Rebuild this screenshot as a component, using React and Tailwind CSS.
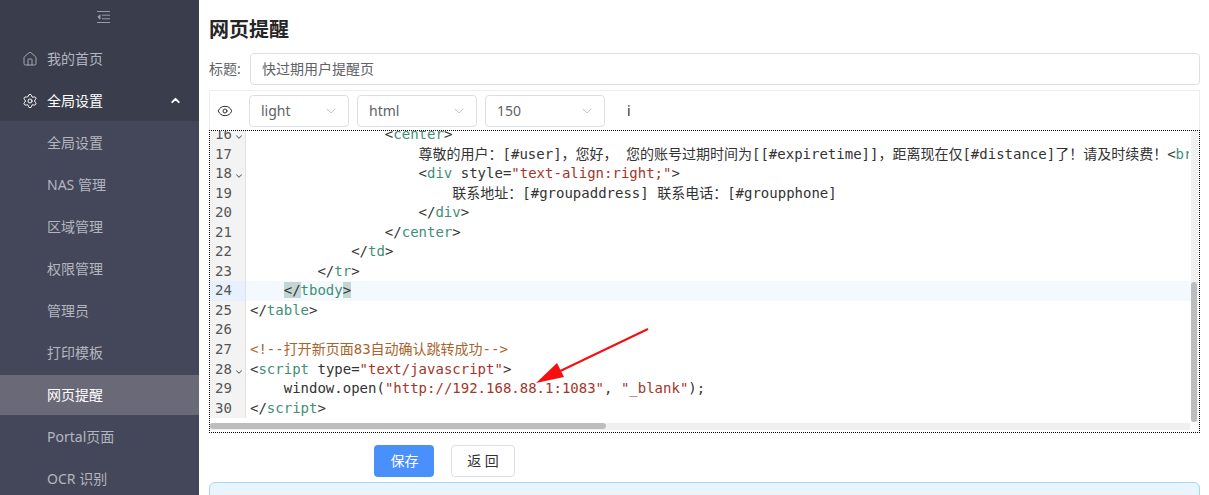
import React from "react";
import { ChevronDown, ChevronUp, Eye, House, Settings } from "lucide-react";

const subMenus = ["全局设置", "NAS 管理", "区域管理", "权限管理", "管理员", "打印模板", "网页提醒", "Portal页面", "OCR 识别"];

// token helpers for the code lines
const B = ({ children }) => <span className="text-[#333333]">{children}</span>;
const T = ({ children }) => <span className="text-[#3f8f78]">{children}</span>;
const S = ({ children }) => <span className="text-[#a5352a]">{children}</span>;
const H = ({ children }) => <span className="bg-[#c3d6d6] text-[#333333]">{children}</span>;

const codeLines = [
  { no: 16, fold: true, indent: 16, code: <><B>&lt;</B><T>center</T><B>&gt;</B></> },
  { no: 17, indent: 20, code: <B>尊敬的用户：[#user]，您好， 您的账号过期时间为[[#expiretime]]，距离现在仅[#distance]了！请及时续费！<B>&lt;</B><T>br</T></B> },
  { no: 18, fold: true, indent: 20, code: <><B>&lt;</B><T>div</T> <B>style=</B><S>"text-align:right;"</S><B>&gt;</B></> },
  { no: 19, indent: 24, code: <B>联系地址：[#groupaddress] 联系电话：[#groupphone]</B> },
  { no: 20, indent: 20, code: <><B>&lt;/</B><T>div</T><B>&gt;</B></> },
  { no: 21, indent: 16, code: <><B>&lt;/</B><T>center</T><B>&gt;</B></> },
  { no: 22, indent: 12, code: <><B>&lt;/</B><T>td</T><B>&gt;</B></> },
  { no: 23, indent: 8, code: <><B>&lt;/</B><T>tr</T><B>&gt;</B></> },
  { no: 24, active: true, indent: 4, code: <><H>&lt;/</H><T>tbody</T><H>&gt;</H></> },
  { no: 25, indent: 0, code: <><B>&lt;/</B><T>table</T><B>&gt;</B></> },
  { no: 26, indent: 0, code: "" },
  { no: 27, indent: 0, code: <span className="text-[#a8642c]">&lt;!--打开新页面83自动确认跳转成功--&gt;</span> },
  { no: 28, fold: true, indent: 0, code: <><B>&lt;</B><T>script</T> <B>type=</B><S>"text/javascript"</S><B>&gt;</B></> },
  { no: 29, indent: 4, code: <><B>window.open(</B><S>"http://192.168.88.1:1083"</S><B>, </B><S>"_blank"</S><B>);</B></> },
  { no: 30, indent: 0, code: <><B>&lt;/</B><T>script</T><B>&gt;</B></> },
];

function Sidebar() {
  return (
    <aside className="w-[199px] shrink-0 h-[495px] overflow-hidden bg-[#3a3d4c] text-sm text-[#b3b6c0]">
      {/* Collapse toggle */}
      <div className="h-[38px] flex justify-center pt-[11px] pl-[7px]">
        <svg width="13" height="12" viewBox="0 0 13 12" fill="none" stroke="#9a9ca6" strokeWidth="1">
          <path d="M0 .5h13M5 4.2h8M5 7.8h8M0 11.5h13" />
          <path d="M3 3.8 0.8 6 3 8.2z" fill="#9a9ca6" />
        </svg>
      </div>
      <div className="h-[42px] flex items-center pl-[22px]">
        <House size={16} strokeWidth={1.3} className="mr-[9px]" />
        <span>我的首页</span>
      </div>
      <div className="h-[41px] flex items-center pl-[22px] pr-[17px] text-white">
        <Settings size={16} strokeWidth={1.5} className="mr-[9px]" />
        <span className="grow">全局设置</span>
        <ChevronUp size={13} strokeWidth={3.5} />
      </div>
      <ul className="bg-[#434759] pt-[2px]">
        {subMenus.map((name) => (
          <li
            key={name}
            className={
              name === "网页提醒"
                ? "h-10 mb-[2px] flex items-center pl-[47px] bg-[#6a6977] text-white"
                : "h-10 mb-[2px] flex items-center pl-[47px]"
            }
          >
            {name}
          </li>
        ))}
      </ul>
    </aside>
  );
}

function Select({ value, width }) {
  return (
    <div className={`${width} h-8 flex items-center justify-between pl-[11px] pr-[9px] border border-[#dcdfe6] rounded text-[#606266] text-sm bg-white`}>
      <span>{value}</span>
      <ChevronDown size={16} strokeWidth={1} className="text-[#a8abb2]" />
    </div>
  );
}

function CodeEditor() {
  return (
    <div className="relative h-[303px] border border-dotted border-black overflow-hidden bg-white">
      <div className="-mt-[6px] font-['DejaVu_Sans_Mono','Noto_Sans_CJK_SC',monospace] text-sm leading-[19.55px]">
        {codeLines.map((line) => (
          <div
            key={line.no}
            className={line.active ? "flex h-[19.55px] bg-[#f3f9fd]" : "flex h-[19.55px]"}
          >
            <div
              className={
                line.active
                  ? "relative w-[36px] shrink-0 pl-[5px] bg-[#e6f1fd] border-r border-[#e2e2e2] text-[#555555]"
                  : "relative w-[36px] shrink-0 pl-[5px] bg-[#f3f3f3] border-r border-[#e2e2e2] text-[#555555]"
              }
            >
              {line.no}
              {line.fold && (
                <ChevronDown size={10} strokeWidth={2.5} className="absolute right-[1px] top-[7px] text-[#666666]" />
              )}
            </div>
            <pre className="pl-[4px] font-['DejaVu_Sans_Mono','Noto_Sans_CJK_SC',monospace] whitespace-pre overflow-hidden w-[943px]">
              {" ".repeat(line.indent)}
              {line.code}
            </pre>
          </div>
        ))}
      </div>

      {/* Scrollbars */}
      <div className="absolute right-[1px] top-0 bottom-[10px] w-[7px] bg-[#f0f0f0]">
        <div className="absolute left-0 right-[1px] top-[151px] bottom-0 rounded bg-[#bdbdbd]" />
      </div>
      <div className="absolute left-0 right-[9px] bottom-[2px] h-[7px] bg-[#f0f0f0]">
        <div className="h-[6px] w-[396px] rounded bg-[#bdbdbd]" />
      </div>

      {/* Annotation arrow drawn over the screenshot */}
      <svg className="absolute left-[100px] top-[190px]" width="360" height="80" viewBox="0 0 360 80" fill="none">
        <path d="M338 8 244 53" stroke="#f50f0f" strokeWidth="2" />
        <path d="M226 62 247 42 254 56z" fill="#f50f0f" />
      </svg>
    </div>
  );
}

export default function App() {
  return (
    <div className="flex w-[1209px] h-[495px] overflow-hidden bg-white font-['Noto_Sans','Noto_Sans_CJK_SC',sans-serif]">
      <Sidebar />
      <main className="w-[991px] ml-[10px] shrink-0">
        <h1 className="h-[53px] pt-[14px] text-xl leading-[32px] font-bold text-[#262626]">网页提醒</h1>
        <div className="flex items-center h-8 text-sm">
          <label className="w-[41px] shrink-0 text-[#606266]">标题:</label>
          <input
            readOnly
            value="快过期用户提醒页"
            className="grow h-8 pl-[11px] pr-3 pb-[2px] border border-[#dcdfe6] rounded text-[#606266] font-['Noto_Sans_CJK_SC',sans-serif] outline-none"
          />
        </div>
        <div className="mt-[5px] h-10 flex items-center gap-2 border border-b-0 border-[#eeeeee] pt-[1px]">
          <div className="w-[39px] -mr-2 flex justify-center pr-[9px]">
            <Eye size={16} strokeWidth={1.5} className="text-[#303133]" />
          </div>
          <Select value="light" width="w-[100px]" />
          <Select value="html" width="w-[120px]" />
          <Select value="150" width="w-[120px]" />
          <span className="ml-[14px] text-sm text-[#303133]">i</span>
        </div>
        <CodeEditor />
        <div className="mt-[12px] flex pl-[165px] text-sm">
          <button className="w-[60px] h-8 pl-[1px] rounded bg-[#4a90fb] text-white">保存</button>
          <button className="w-[64px] h-8 ml-[17px] rounded border border-[#dcdfe6] text-[#303133] bg-white">返 回</button>
        </div>
        <div className="mt-[5px] h-10 border border-[#a6d5fa] rounded-md bg-[#e9f5fe]" />
      </main>
    </div>
  );
}
